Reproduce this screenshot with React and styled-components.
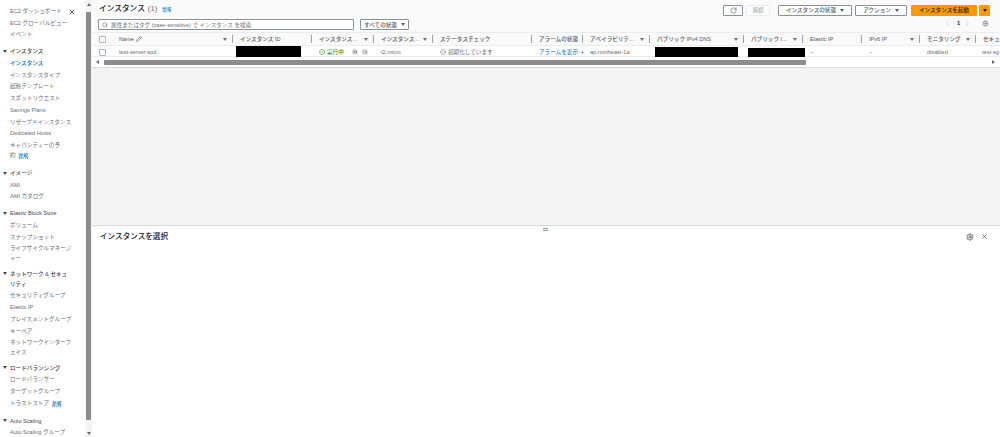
import styled, { createGlobalStyle } from "styled-components";
import {
  ChevronLeft,
  ChevronRight,
  CircleCheck,
  Pencil,
  Plus,
  RotateCw,
  Search,
  Settings,
  X,
  ZoomIn,
  ZoomOut,
} from "lucide-react";

const NAV = [
  {
    items: [
      { label: "EC2 ダッシュボード" },
      { label: "EC2 グローバルビュー" },
      { label: "イベント" },
    ],
  },
  {
    title: "インスタンス",
    items: [
      { label: "インスタンス", active: true },
      { label: "インスタンスタイプ" },
      { label: "起動テンプレート" },
      { label: "スポットリクエスト" },
      { label: "Savings Plans" },
      { label: "リザーブドインスタンス" },
      { label: "Dedicated Hosts" },
      { label: "キャパシティーの予\n約", badge: true },
    ],
  },
  { title: "イメージ", items: [{ label: "AMI" }, { label: "AMI カタログ" }] },
  {
    title: "Elastic Block Store",
    items: [
      { label: "ボリューム" },
      { label: "スナップショット" },
      { label: "ライフサイクルマネージ\nャー", tight: true },
    ],
  },
  {
    title: "ネットワーク & セキュ\nリティ",
    items: [
      { label: "セキュリティグループ" },
      { label: "Elastic IP" },
      { label: "プレイスメントグループ" },
      { label: "キーペア" },
      { label: "ネットワークインターフ\nェイス", tight: true },
    ],
  },
  {
    title: "ロードバランシング",
    items: [
      { label: "ロードバランサー" },
      { label: "ターゲットグループ" },
      { label: "トラストストア", badge: true },
    ],
  },
  { title: "Auto Scaling", items: [{ label: "Auto Scaling グループ" }] },
];

const COLUMNS = [
  { label: "Name", width: 121, sort: true, edit: true },
  { label: "インスタンス ID", width: 79 },
  { label: "インスタンス...", width: 62, sort: true },
  { label: "インスタンス...", width: 59, sort: true },
  { label: "ステータスチェック", width: 99 },
  { label: "アラームの状態", width: 51 },
  { label: "アベイラビリテ...", width: 67, sort: true },
  { label: "パブリック IPv4 DNS", width: 94, sort: true },
  { label: "パブリック I...", width: 59, sort: true },
  { label: "Elastic IP", width: 59 },
  { label: "IPv6 IP", width: 58, sort: true },
  { label: "モニタリング", width: 56, sort: true },
  { label: "セキュリティグループ", width: 80 },
];

const TEMPLATE = `20px ${COLUMNS.map((c) => `${c.width}px`).join(" ")}`;

const GlobalStyle = createGlobalStyle`
  html, body {
    margin: 0;
    padding: 0;
    height: 100%;
    background: #f2f3f3;
  }
  body {
    font-family: "Liberation Sans", "Noto Sans CJK JP", sans-serif;
    font-size: 5.6px;
    color: #545b64;
    overflow: hidden;
  }
`;

const Page = styled.div`
  display: flex;
  width: 1000px;
  height: 437px;
  overflow: hidden;
`;

const Sidebar = styled.aside`
  display: flex;
  flex: 0 0 92px;
  background: #fff;
`;

const Nav = styled.nav`
  position: relative;
  flex: 0 0 85px;
  padding: 5.2px 0 0 10px;
  box-sizing: border-box;
  overflow: hidden;
`;

const CloseNav = styled.span`
  position: absolute;
  top: 7.5px;
  left: 68px;
  display: flex;
  color: #414750;
`;

const NavGroup = styled.div`
  margin-bottom: 5.3px;
`;

const GroupTitle = styled.div`
  position: relative;
  min-height: 11.7px;
  padding: 0.85px 0;
  box-sizing: border-box;
  line-height: 10px;
  font-weight: 500;
  color: #414750;
  white-space: pre-line;
  &::before {
    content: "";
    position: absolute;
    left: -7px;
    top: 4.5px;
    border-left: 2.2px solid transparent;
    border-right: 2.2px solid transparent;
    border-top: 3.2px solid #414750;
  }
`;

const NavItem = styled.div`
  min-height: 11.7px;
  margin-bottom: ${(p) => (p.$tight ? -1.5 : 0)}px;
  padding: 0.85px 0;
  box-sizing: border-box;
  line-height: 10px;
  white-space: pre-line;
  color: ${(p) => (p.$active ? "#0073bb" : "#687078")};
  font-weight: ${(p) => (p.$active ? 500 : 400)};
`;

const NewBadge = styled.span`
  margin-left: 3px;
  font-size: 4.6px;
  font-weight: 500;
  color: #0073bb;
  border-bottom: 1px dotted #5fa8d3;
`;

const NavScroll = styled.div`
  position: relative;
  flex: 0 0 7px;
  display: flex;
  flex-direction: column;
  align-items: center;
  background: #f4f4f4;
  padding-top: 3px;
  box-sizing: border-box;
`;

const ScrollThumb = styled.div`
  width: 5px;
  height: 408px;
  margin-top: 6px;
  background: #8c8c8c;
`;

const ArrowUp = styled.i`
  border-left: 2.5px solid transparent;
  border-right: 2.5px solid transparent;
  border-bottom: 3px solid #6b6b6b;
`;

const ArrowDown = styled.i`
  margin-top: 12px;
  border-left: 2.5px solid transparent;
  border-right: 2.5px solid transparent;
  border-top: 3px solid #6b6b6b;
`;

const Main = styled.main`
  flex: 1;
  min-width: 0;
  display: flex;
  flex-direction: column;
`;

const TopCard = styled.section`
  background: #fff;
  height: 68px;
  border-bottom: 1px solid #d5dbdb;
  box-sizing: border-box;
  overflow: hidden;
`;

const CardHeader = styled.header`
  display: flex;
  justify-content: space-between;
  height: 32px;
  padding: 3px 10px 0 6px;
  box-sizing: border-box;
  background: #fafafa;
`;

const HeaderLeft = styled.div`
  display: flex;
  flex-direction: column;
  gap: 4px;
`;

const TitleRow = styled.div`
  display: flex;
  align-items: baseline;
  height: 12px;
  padding: 1px 0 0 1px;
  box-sizing: border-box;
  line-height: 10px;
`;

const Title = styled.h1`
  margin: 0;
  font-size: 7.7px;
  font-weight: 500;
  color: #16191f;
`;

const Count = styled.span`
  margin-left: 3px;
  font-size: 7.7px;
  color: #687078;
`;

const InfoLink = styled.a`
  margin-left: 5px;
  font-size: 4.4px;
  font-weight: 500;
  color: #0073bb;
`;

const FilterRow = styled.div`
  display: flex;
  gap: 6px;
`;

const SearchBox = styled.div`
  display: flex;
  align-items: center;
  gap: 3px;
  width: 256px;
  height: 11px;
  padding-left: 3px;
  box-sizing: border-box;
  background: #fff;
  border: 1px solid #879596;
  border-radius: 1px;
  color: #687078;
  svg {
    color: #545b64;
  }
`;

const Button = styled.button`
  display: inline-flex;
  align-items: center;
  justify-content: center;
  gap: 4px;
  width: ${(p) => p.$w}px;
  height: 11px;
  margin: 0 0 0 ${(p) => p.$gap || 0}px;
  padding: 0;
  box-sizing: border-box;
  background: #fff;
  border: 1px solid ${(p) => (p.disabled ? "#eaeded" : "#879596")};
  border-radius: 1px;
  font: inherit;
  font-weight: 500;
  color: ${(p) => (p.disabled ? "#aab7b8" : "#545b64")};
`;

const Caret = styled.i`
  display: inline-block;
  flex: none;
  border-left: 2px solid transparent;
  border-right: 2px solid transparent;
  border-top: 3px solid ${(p) => p.$color || "#545b64"};
`;

const HeaderRight = styled.div`
  display: flex;
  flex-direction: column;
  align-items: flex-end;
  gap: 2px;
`;

const ActionRow = styled.div`
  display: flex;
  align-items: center;
  height: 12px;
  margin-top: 1px;
`;

const Primary = styled.div`
  display: flex;
  gap: 2px;
  margin-left: 4px;
`;

const PrimaryButton = styled.button`
  display: inline-flex;
  align-items: center;
  justify-content: center;
  width: ${(p) => p.$w}px;
  height: 11px;
  margin: 0;
  padding: 0;
  border: 0;
  border-radius: 1px;
  background: #ff9900;
  font: inherit;
  font-weight: 500;
  color: #16191f;
`;

const Pager = styled.div`
  display: flex;
  align-items: center;
  height: 10px;
  color: #aab7b8;
  font-weight: 700;
`;

const PageNumber = styled.span`
  margin: 0 4px 0 6px;
  color: #16191f;
`;

const PagerGear = styled.span`
  display: flex;
  margin: 0 1px 0 11px;
  color: #545b64;
`;

const Table = styled.div`
  overflow: hidden;
`;

const Row = styled.div`
  display: grid;
  grid-template-columns: ${TEMPLATE};
  width: 1003px;
  align-items: center;
  height: ${(p) => p.$h}px;
  background: ${(p) => p.$bg || "#fff"};
  border-top: ${(p) => (p.$head ? "1px solid #eaeded" : "0")};
  border-bottom: 1px solid #eaeded;
  box-sizing: border-box;
`;

const CheckCell = styled.div`
  display: flex;
  justify-content: center;
`;

const Check = styled.span`
  width: 5px;
  height: 5px;
  border: 1px solid #aab7b8;
  border-radius: 1px;
  background: #fff;
`;

const HeadCell = styled.div`
  position: relative;
  display: flex;
  align-items: center;
  gap: 2px;
  height: 8px;
  padding-left: 7px;
  font-weight: 500;
  color: #545b64;
  white-space: nowrap;
  &::after {
    content: "";
    position: absolute;
    right: 0;
    top: 0;
    height: 8px;
    width: 1px;
    background: #95a5a6;
  }
`;

const SortMark = styled.span`
  position: absolute;
  right: 6px;
  top: 3px;
  display: flex;
`;

const Cell = styled.div`
  display: flex;
  align-items: center;
  gap: 2px;
  padding-left: ${(p) => p.$pad ?? 7}px;
  white-space: nowrap;
  color: ${(p) => p.$color || "#687078"};
`;

const Redacted = styled.div`
  width: ${(p) => p.$w}px;
  height: ${(p) => p.$h}px;
  margin-left: ${(p) => p.$x}px;
  background: #000;
`;

const StatusIcon = styled.span`
  display: flex;
  margin-left: ${(p) => p.$gap || 0}px;
  color: ${(p) => p.$color || "#545b64"};
`;

const HScroll = styled.div`
  display: flex;
  align-items: center;
  height: 10px;
  padding: 0 5px 0 4px;
  gap: 5px;
`;

const HTrack = styled.div`
  flex: 1;
  height: 5px;
`;

const HThumb = styled.div`
  width: 702px;
  height: 100%;
  background: #8c8c8c;
  border-radius: 1px;
`;

const HLeft = styled.i`
  border-top: 2.5px solid transparent;
  border-bottom: 2.5px solid transparent;
  border-right: 3px solid #6b6b6b;
`;

const HRight = styled.i`
  border-top: 2.5px solid transparent;
  border-bottom: 2.5px solid transparent;
  border-left: 3px solid #6b6b6b;
`;

const Spacer = styled.div`
  flex: 0 0 157px;
  background: #f2f3f3;
`;

const DetailPanel = styled.section`
  position: relative;
  flex: 1;
  background: #fff;
  border-top: 1px solid #d5dbdb;
`;

const DragHandle = styled.span`
  position: absolute;
  top: 2px;
  left: 451px;
  width: 5px;
  height: 3px;
  border-top: 1px solid #879596;
  border-bottom: 1px solid #879596;
  box-sizing: border-box;
`;

const DetailHeader = styled.header`
  display: flex;
  align-items: center;
  justify-content: space-between;
  padding: 3px 12px 0 8px;
  height: 15px;
`;

const DetailTitle = styled.h2`
  margin: 0 0 2px;
  font-size: 7.6px;
  font-weight: 500;
  color: #16191f;
`;

const DetailTools = styled.div`
  display: flex;
  align-items: center;
  gap: 7px;
  color: #545b64;
`;

function NavEntry({ item }) {
  return (
    <NavItem $active={item.active} $tight={item.tight}>
      {item.label}
      {item.badge && <NewBadge>新規</NewBadge>}
    </NavItem>
  );
}

function Sort() {
  return (
    <SortMark>
      <Caret $color="#687078" />
    </SortMark>
  );
}

export default function App() {
  return (
    <Page>
      <GlobalStyle />
      <Sidebar>
        <Nav>
          <CloseNav>
            <X size={8} strokeWidth={2.4} />
          </CloseNav>
          {NAV.map((group, i) => (
            <NavGroup key={i}>
              {group.title && <GroupTitle>{group.title}</GroupTitle>}
              {group.items.map((item) => (
                <NavEntry key={item.label} item={item} />
              ))}
            </NavGroup>
          ))}
        </Nav>
        <NavScroll>
          <ArrowUp />
          <ScrollThumb />
          <ArrowDown />
        </NavScroll>
      </Sidebar>

      <Main>
        <TopCard>
          <CardHeader>
            <HeaderLeft>
              <TitleRow>
                <Title>インスタンス</Title>
                <Count>(1)</Count>
                <InfoLink>情報</InfoLink>
              </TitleRow>
              <FilterRow>
                <SearchBox>
                  <Search size={6} strokeWidth={2} />
                  属性またはタグ (case-sensitive) で インスタンス を検索
                </SearchBox>
                <Button $w={49}>
                  すべての状態
                  <Caret />
                </Button>
              </FilterRow>
            </HeaderLeft>
            <HeaderRight>
              <ActionRow>
                <Button $w={20}>
                  <RotateCw size={7} strokeWidth={2} />
                </Button>
                <Button $w={24} $gap={3} disabled>
                  接続
                </Button>
                <Button $w={74} $gap={8}>
                  インスタンスの状態
                  <Caret />
                </Button>
                <Button $w={52} $gap={3}>
                  アクション
                  <Caret />
                </Button>
                <Primary>
                  <PrimaryButton $w={66}>インスタンスを起動</PrimaryButton>
                  <PrimaryButton $w={11}>
                    <Caret $color="#16191f" />
                  </PrimaryButton>
                </Primary>
              </ActionRow>
              <Pager>
                <ChevronLeft size={7} strokeWidth={2} />
                <PageNumber>1</PageNumber>
                <ChevronRight size={7} strokeWidth={2} />
                <PagerGear>
                  <Settings size={7} strokeWidth={2} />
                </PagerGear>
              </Pager>
            </HeaderRight>
          </CardHeader>

          <Table>
            <Row $h={14} $head $bg="#fafafa">
              <CheckCell>
                <Check />
              </CheckCell>
              {COLUMNS.map((col, i) => (
                <HeadCell key={i}>
                  {col.label}
                  {col.edit && <Pencil size={6} strokeWidth={2} />}
                  {col.sort && <Sort />}
                </HeadCell>
              ))}
            </Row>
            <Row $h={11}>
              <CheckCell>
                <Check />
              </CheckCell>
              <Cell>test-server-spd</Cell>
              <Redacted $w={65} $h={12} $x={3} />
              <Cell $pad={7} $color="#1d8102">
                <StatusIcon $color="#1d8102">
                  <CircleCheck size={6} strokeWidth={2} />
                </StatusIcon>
                実行中
                <StatusIcon $gap={6}>
                  <ZoomIn size={6} strokeWidth={2} />
                </StatusIcon>
                <StatusIcon $gap={2}>
                  <ZoomOut size={6} strokeWidth={2} />
                </StatusIcon>
              </Cell>
              <Cell>t2.micro</Cell>
              <Cell>
                <StatusIcon>
                  <CircleCheck size={6} strokeWidth={1.8} />
                </StatusIcon>
                初期化しています
              </Cell>
              <Cell $color="#0073bb">
                アラームを表示
                <StatusIcon $color="#414750">
                  <Plus size={5} strokeWidth={2} />
                </StatusIcon>
              </Cell>
              <Cell>ap-northeast-1a</Cell>
              <Redacted $w={83} $h={10} $x={5} />
              <Redacted $w={57} $h={9} $x={4} />
              <Cell>–</Cell>
              <Cell>–</Cell>
              <Cell>disabled</Cell>
              <Cell $pad={6}>test-sg-group</Cell>
            </Row>
          </Table>
          <HScroll>
            <HLeft />
            <HTrack>
              <HThumb />
            </HTrack>
            <HRight />
          </HScroll>
        </TopCard>

        <Spacer />

        <DetailPanel>
          <DragHandle />
          <DetailHeader>
            <DetailTitle>インスタンスを選択</DetailTitle>
            <DetailTools>
              <Settings size={8} strokeWidth={2.6} />
              <X size={7} strokeWidth={2.6} />
            </DetailTools>
          </DetailHeader>
        </DetailPanel>
      </Main>
    </Page>
  );
}
